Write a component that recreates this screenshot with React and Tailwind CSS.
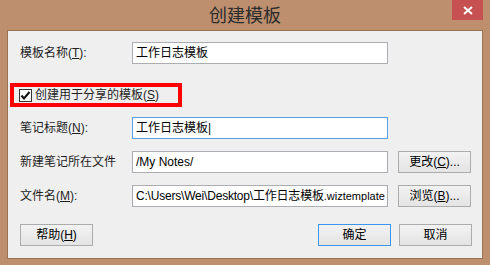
import React from 'react';

const font = { fontFamily: '"Liberation Sans", "Noto Sans CJK SC", sans-serif' };

const Label = ({ children }) => (
  <div className="w-[112px] shrink-0 text-[12px] text-[#1e1e1e] leading-[22px]">{children}</div>
);

const Input = ({ children, focused }) => (
  <div
    className={`w-[256px] h-[22px] bg-white border pl-[3px] text-[12px] leading-[20px] text-black whitespace-nowrap overflow-hidden ${
      focused ? 'border-[#569de5]' : 'border-[#abadb3]'
    }`}
  >
    {children}
  </div>
);

const Button = ({ children, primary }) => (
  <div
    className={`w-[73px] h-[22px] flex items-center justify-center text-[12px] text-black bg-gradient-to-b from-[#f2f2f2] to-[#e4e4e4] border ${
      primary ? 'border-[#3c96f0]' : 'border-[#acacac]'
    }`}
  >
    {children}
  </div>
);

export default function App() {
  return (
    <div className="w-[490px] h-[265px] bg-[#bd8f6e] flex flex-col" style={font}>
      {/* Title bar */}
      <div className="relative h-[30px] flex items-center justify-center">
        <span className="text-[18px] text-[#2b2b2b] leading-none mt-[1px]">创建模板</span>
        <div className="absolute right-[7px] top-0 w-[31px] h-[20px] bg-[#c75050] flex items-center justify-center">
          <svg width="10" height="9" viewBox="0 0 10 9">
            <path d="M1 1 L9 8 M9 1 L1 8" stroke="white" strokeWidth="2" />
          </svg>
        </div>
      </div>

      {/* Client area */}
      <div className="mx-[7px] h-[229px] bg-[#efefef] border border-[#9a7153] flex flex-col pl-[12px] pr-[10px]">
        <div className="flex items-center mt-[11px]">
          <Label>
            模板名称(<u>T</u>):
          </Label>
          <Input>工作日志模板</Input>
        </div>

        <div className="mt-[19px] -ml-[10px] w-[172px] h-[24px] border-[4px] border-[#ff0000] flex items-center pl-[5px]">
          <div className="w-[13px] h-[13px] border border-[#333] bg-white flex items-center justify-center">
            <svg width="11" height="11" viewBox="0 0 11 11">
              <path d="M1.5 5.5 L4 8.5 L9.5 2" stroke="#111" strokeWidth="2" fill="none" />
            </svg>
          </div>
          <span className="ml-[3px] text-[12px] text-[#1e1e1e]">
            创建用于分享的模板(<u>S</u>)
          </span>
        </div>

        <div className="flex items-center mt-[10px]">
          <Label>
            笔记标题(<u>N</u>):
          </Label>
          <Input focused>工作日志模板|</Input>
        </div>

        <div className="flex items-center mt-[12px]">
          <Label>新建笔记所在文件</Label>
          <Input>/My Notes/</Input>
          <div className="ml-[10px]">
            <Button>
              更改(<u>C</u>)...
            </Button>
          </div>
        </div>

        <div className="flex items-center mt-[12px]">
          <Label>
            文件名(<u>M</u>):
          </Label>
          <Input>
            <span className="tracking-[-0.2px]">C:\Users\Wei\Desktop\工作日志模板</span>
            <span className="text-[11px]">.wiztemplate</span>
          </Input>
          <div className="ml-[10px]">
            <Button>
              浏览(<u>B</u>)...
            </Button>
          </div>
        </div>

        <div className="flex items-center mt-[17px]">
          <Button>
            帮助(<u>H</u>)
          </Button>
          <div className="flex-1" />
          <Button primary>确定</Button>
          <div className="ml-[8px]">
            <Button>取消</Button>
          </div>
        </div>
      </div>
    </div>
  );
}
